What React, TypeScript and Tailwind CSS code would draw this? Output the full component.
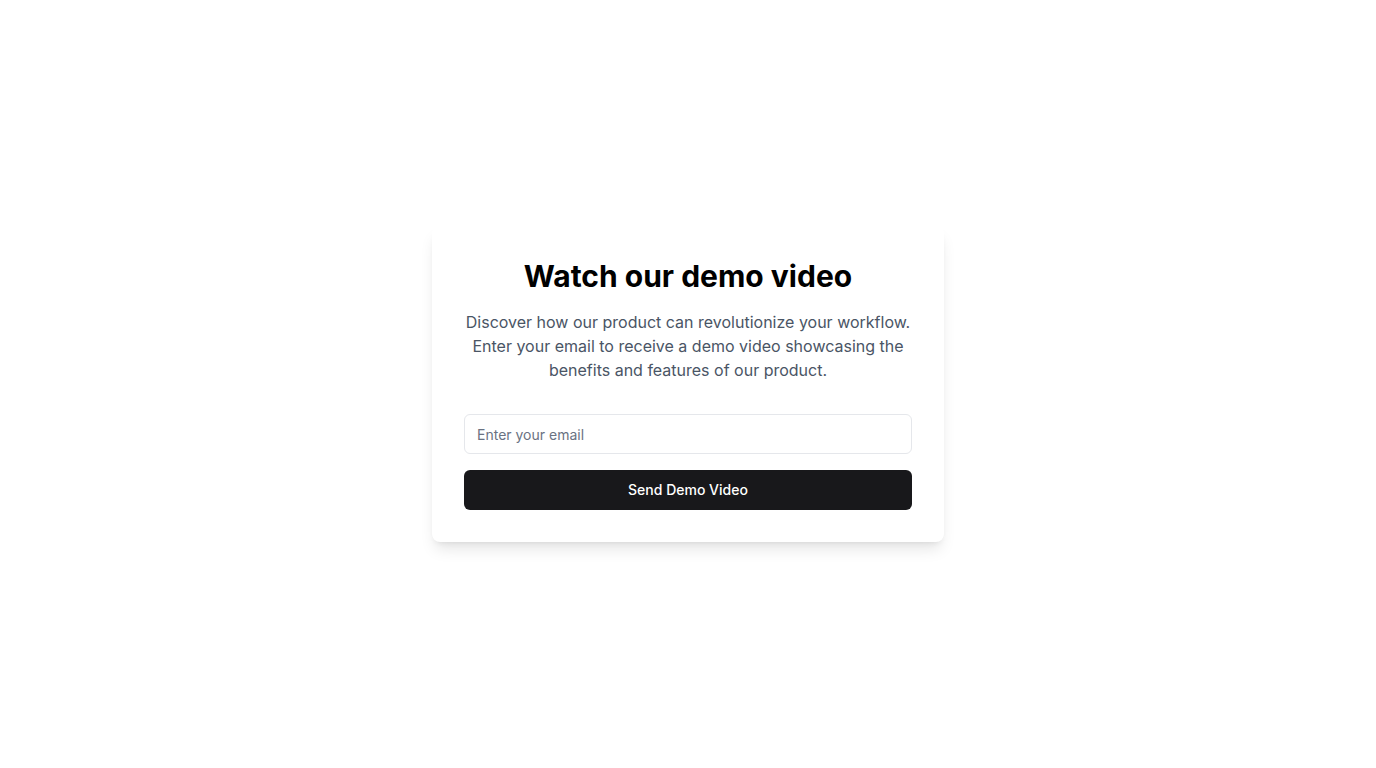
export default function App() {
  return (
    <div
      className="min-h-screen w-full bg-white flex items-center justify-center"
      style={{ fontFamily: "Inter, 'Noto Sans', sans-serif" }}
    >
      <div className="w-full max-w-lg bg-white rounded-lg shadow-lg p-8">
        <h1 className="text-3xl font-bold text-black text-center mb-4">Watch our demo video</h1>
        <p className="text-base text-gray-600 text-center mb-8">
          Discover how our product can revolutionize your workflow. Enter your email to receive a demo video
          showcasing the benefits and features of our product.
        </p>
        <form className="flex flex-col gap-4" onSubmit={(e) => e.preventDefault()}>
          <input
            type="email"
            placeholder="Enter your email"
            className="h-10 w-full rounded-md border border-gray-200 px-3 text-sm text-gray-900 placeholder:text-gray-500 outline-none"
          />
          <button
            type="submit"
            className="h-10 w-full rounded-md bg-[#18181b] text-sm font-medium text-white"
          >
            Send Demo Video
          </button>
        </form>
      </div>
    </div>
  );
}
